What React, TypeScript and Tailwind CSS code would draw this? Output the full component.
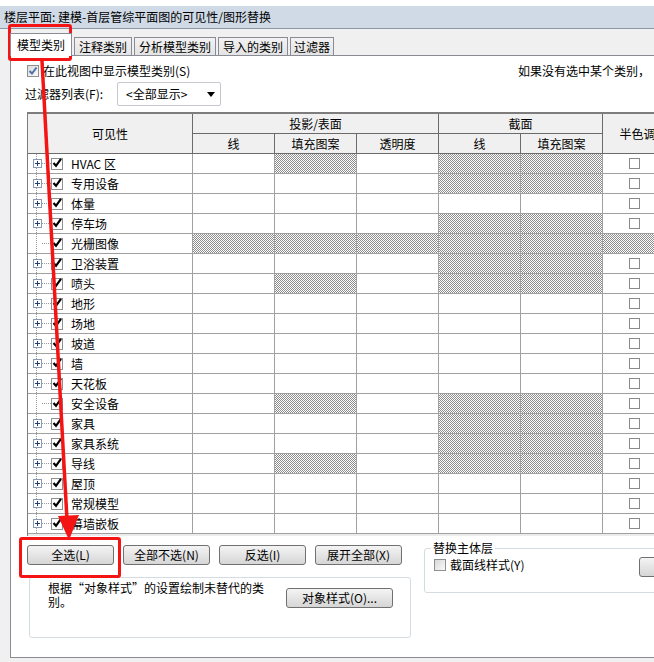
import React from 'react'

// 填充图案单元格的网点底纹
const hatch = 'bg-[image:repeating-conic-gradient(#8c8c8c_0_25%,#ffffff_0_50%)] bg-[length:2px_2px]'

type Row = { name: string; plus: boolean; mask: string }

const rows: Row[] = [
  { name: 'HVAC 区', plus: true, mask: 'Flf' },
  { name: '专用设备', plus: true, mask: 'lf' },
  { name: '体量', plus: true, mask: '' },
  { name: '停车场', plus: true, mask: 'lf' },
  { name: '光栅图像', plus: false, mask: 'LFTlfH' },
  { name: '卫浴装置', plus: true, mask: 'lf' },
  { name: '喷头', plus: true, mask: 'Flf' },
  { name: '地形', plus: true, mask: '' },
  { name: '场地', plus: true, mask: '' },
  { name: '坡道', plus: true, mask: '' },
  { name: '墙', plus: true, mask: '' },
  { name: '天花板', plus: true, mask: '' },
  { name: '安全设备', plus: false, mask: 'Flf' },
  { name: '家具', plus: true, mask: 'lf' },
  { name: '家具系统', plus: true, mask: 'lf' },
  { name: '导线', plus: true, mask: 'Flf' },
  { name: '屋顶', plus: true, mask: '' },
  { name: '常规模型', plus: true, mask: '' },
  { name: '幕墙嵌板', plus: true, mask: '' },
]

function PlusBox() {
  return (
    <svg width="9" height="9" viewBox="0 0 9 9" className="relative bg-white">
      <rect x="0.5" y="0.5" width="8" height="8" fill="#fff" stroke="#8a9bb3" />
      <path d="M2 4.5h5M4.5 2v5" stroke="#1f3f7a" strokeWidth="1" />
    </svg>
  )
}

function Check({ color = '#000' }: { color?: string }) {
  return (
    <div className="w-[12px] h-[12px] border border-[#8e8f8f] bg-white relative">
      <svg width="12" height="12" viewBox="0 0 12 12" className="absolute -left-px -top-[2px]">
        <path d="M2.5 6 L5 8.8 L10 1.8" fill="none" stroke={color} strokeWidth="2.2" />
      </svg>
    </div>
  )
}

function Btn({ label, w }: { label: string; w: string }) {
  return (
    <div
      className={`${w} h-[20px] flex items-center justify-center rounded-[3px] border border-[#707070] bg-gradient-to-b from-[#f4f4f4] to-[#d6d6d6] text-[12px] leading-none`}
    >
      {label}
    </div>
  )
}

function Cell({ on, w, children }: { on: boolean; w: string; children?: React.ReactNode }) {
  return <div className={`${w} h-full border-r border-[#a0a0a0] ${on ? hatch : 'bg-white'}`}>{children}</div>
}

export default function App() {
  const tabs = [
    { t: '注释类别', w: 'w-[58px]' },
    { t: '分析模型类别', w: 'w-[82px]' },
    { t: '导入的类别', w: 'w-[70px]' },
    { t: '过滤器', w: 'w-[44px]' },
  ]

  return (
    <div className="w-[654px] h-[662px] relative overflow-hidden bg-[#f0f0f0] text-black text-[12px] font-['Noto_Sans_CJK_SC',sans-serif]">
      {/* 顶部残留 */}
      <div className="h-[6px] bg-white" />
      {/* 标题栏 */}
      <div className="h-[23px] bg-[#cfdae6] border-b border-[#8d98a4] pl-[4px] leading-[21px] whitespace-nowrap">
        楼层平面: 建模-首层管综平面图的可见性/图形替换
      </div>
      {/* 选项卡 */}
      <div className="h-[26px] flex items-end pl-[10px] gap-[2px]">
        <div className="relative z-10 w-[62px] h-[23px] -mb-px bg-white border border-b-0 border-[#898c95] flex items-center justify-center leading-none">
          模型类别
        </div>
        {tabs.map((tab) => (
          <div
            key={tab.t}
            className={`${tab.w} h-[18px] border border-b-0 border-[#898c95] bg-gradient-to-b from-[#f2f2f2] to-[#e4e4e4] flex items-center justify-center leading-none`}
          >
            {tab.t}
          </div>
        ))}
      </div>

      {/* 选项卡面板 */}
      <div className="ml-[10px] w-[720px] h-[603px] bg-white border border-[#898c95] flex flex-col">
        <div className="mt-[8px] h-[13px] flex items-center pl-[16px]">
          <div className="w-[491px] flex items-center gap-[4px]">
            <div className="w-[12px] h-[12px] border border-[#8e8f8f] bg-gradient-to-br from-[#dcdcdc] to-[#fafafa] relative">
              <svg width="12" height="12" viewBox="0 0 12 12" className="absolute -left-px -top-px">
                <path d="M2.5 6 L5 8.5 L9.5 2.5" fill="none" stroke="#4d6fa8" strokeWidth="2" />
              </svg>
            </div>
            <span className="leading-none">在此视图中显示模型类别(S)</span>
          </div>
          <span className="leading-none whitespace-nowrap">如果没有选中某个类别，</span>
        </div>

        <div className="mt-[5px] h-[24px] flex items-center pl-[14px]">
          <span className="w-[92px] leading-none">过滤器列表(F):</span>
          <div className="w-[104px] h-[24px] border border-[#c5c8cf] rounded-[2px] flex items-center pl-[8px] pr-[5px] justify-between bg-white">
            <span className="leading-none">&lt;全部显示&gt;</span>
            <svg width="8" height="5" viewBox="0 0 8 5">
              <path d="M0 0h8L4 5z" fill="#000" />
            </svg>
          </div>
        </div>

        {/* 类别表 */}
        <div className="mt-[6px] ml-[16px] w-[700px] border-l border-t-2 border-[#7d7d7d]">
          <div className="flex h-[40px] bg-[#f0f0f0]">
            <div className="w-[165px] h-full border-r border-b border-[#6b6b6b] flex items-center justify-center">可见性</div>
            <div className="w-[246px] flex flex-col">
              <div className="h-[20px] border-r border-b border-[#6b6b6b] flex items-center justify-center">投影/表面</div>
              <div className="h-[20px] flex">
                <div className="w-[82px] border-r border-b border-[#6b6b6b] flex items-center justify-center">线</div>
                <div className="w-[82px] border-r border-b border-[#6b6b6b] flex items-center justify-center">填充图案</div>
                <div className="w-[82px] border-r border-b border-[#6b6b6b] flex items-center justify-center">透明度</div>
              </div>
            </div>
            <div className="w-[164px] flex flex-col">
              <div className="h-[20px] border-r border-b border-[#6b6b6b] flex items-center justify-center">截面</div>
              <div className="h-[20px] flex">
                <div className="w-[82px] border-r border-b border-[#6b6b6b] flex items-center justify-center">线</div>
                <div className="w-[82px] border-r border-b border-[#6b6b6b] flex items-center justify-center">填充图案</div>
              </div>
            </div>
            <div className="w-[70px] h-full border-r border-b border-[#6b6b6b] flex items-center justify-center">半色调</div>
          </div>

          {rows.map((r) => (
            <div key={r.name} className="flex h-[20px] border-b border-[#a0a0a0]">
              <div className="w-[165px] h-full border-r border-[#a0a0a0] flex items-center pl-[5px]">
                <div className="relative w-[9px] h-full flex items-center">
                  <div className="absolute left-[3px] top-0 bottom-0 border-l border-dotted border-[#9a9a9a]" />
                  {r.plus && <PlusBox />}
                </div>
                <div className="w-[9px] border-t border-dotted border-[#9a9a9a]" />
                <Check />
                <span className="ml-[8px] leading-none whitespace-nowrap">{r.name}</span>
              </div>
              <Cell w="w-[82px]" on={r.mask.includes('L')} />
              <Cell w="w-[82px]" on={r.mask.includes('F')} />
              <Cell w="w-[82px]" on={r.mask.includes('T')} />
              <Cell w="w-[82px]" on={r.mask.includes('l')} />
              <Cell w="w-[82px]" on={r.mask.includes('f')} />
              <div className={`w-[70px] h-full border-r border-[#a0a0a0] flex items-center pl-[26px] ${r.mask.includes('H') ? hatch : 'bg-white'}`}>
                {!r.mask.includes('H') && <div className="w-[11px] h-[11px] border border-[#8a8a8a] bg-white" />}
              </div>
            </div>
          ))}
          <div className="h-[2px] bg-[#ececec]" />
        </div>

        {/* 底部按钮与设置 */}
        <div className="flex">
          <div className="flex flex-col pl-[16px]">
            <div className="mt-[9px] flex gap-[9px]">
              <Btn label="全选(L)" w="w-[87px]" />
              <Btn label="全部不选(N)" w="w-[87px]" />
              <Btn label="反选(I)" w="w-[87px]" />
              <Btn label="展开全部(X)" w="w-[87px]" />
            </div>
            <div className="mt-[12px] ml-[2px] w-[382px] h-[61px] border border-[#d3dbe3] rounded-[3px] flex items-start pl-[18px]">
              <div className="w-[238px] mt-[3px] leading-[14px]">
                根据“对象样式”的设置绘制未替代的类
                <br />
                别。
              </div>
              <div className="mt-[10px]">
                <Btn label="对象样式(O)..." w="w-[107px]" />
              </div>
            </div>
          </div>
          <div className="ml-[13px] mt-[12px] w-[300px] h-[45px] relative border border-[#d3dbe3] rounded-[3px] pl-[9px] pt-[10px]">
            <div className="absolute left-[6px] -top-[8px] bg-white px-[2px] leading-[14px]">替换主体层</div>
            <div className="flex items-center gap-[4px]">
              <div className="w-[12px] h-[12px] border border-[#8e8f8f] bg-gradient-to-br from-[#d8d8d8] to-[#fafafa]" />
              <span className="leading-none">截面线样式(Y)</span>
            </div>
            <div className="absolute left-[214px] top-[8px]">
              <Btn label="" w="w-[60px]" />
            </div>
          </div>
        </div>
      </div>

      {/* 红色标注 */}
      <div className="absolute left-[8px] top-[24px] w-[64px] h-[37px] border-[3px] border-[#f51414] rounded-[3px]" />
      <div className="absolute left-[19px] top-[537px] w-[102px] h-[41px] border-[3px] border-[#f51414] rounded-[3px]" />
      <svg className="absolute left-0 top-0" width="654" height="662" viewBox="0 0 654 662">
        <path d="M42 61 L67 520" stroke="#f51414" strokeWidth="3.5" />
        <path d="M58 516 L79 515 L69 540 Z" fill="#f51414" />
      </svg>
    </div>
  )
}
